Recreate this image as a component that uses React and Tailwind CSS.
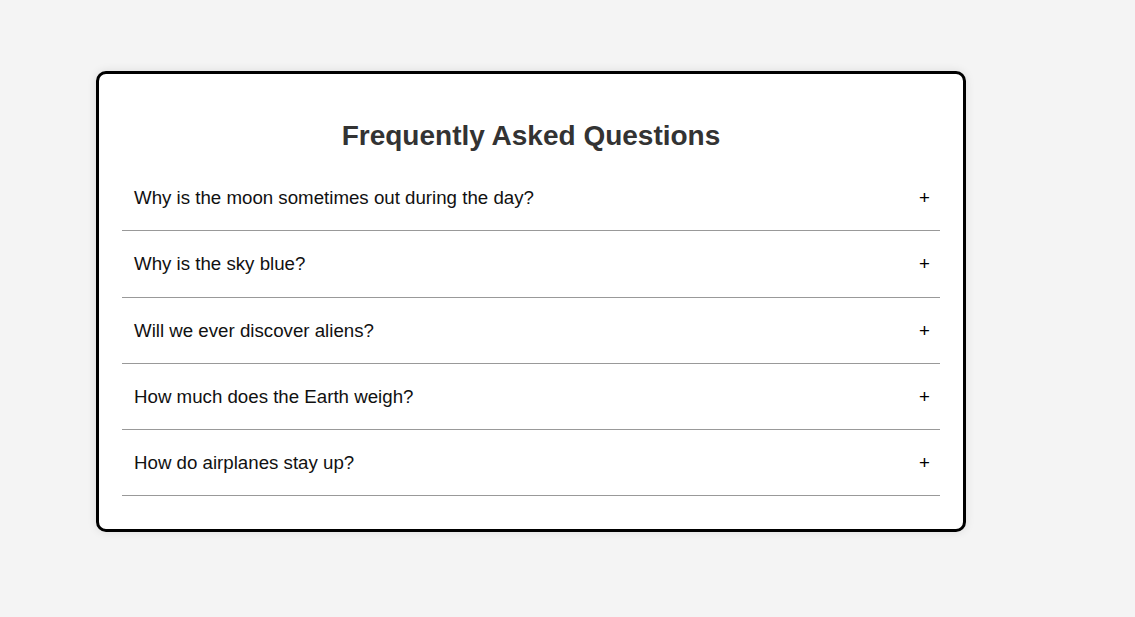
const QUESTIONS = [
  'Why is the moon sometimes out during the day?',
  'Why is the sky blue?',
  'Will we ever discover aliens?',
  'How much does the Earth weigh?',
  'How do airplanes stay up?',
];

export default function App() {
  return (
    <div className="min-h-[617px] bg-[#f4f4f4] pt-[71px] pl-[96px] font-['Liberation_Sans',Arial,sans-serif]">
      <div className="w-[870px] h-[461px] rounded-[10px] border-[3px] border-black bg-white px-[23px] pt-[45px] shadow-[0_0_10px_rgba(0,0,0,0.1)]">
        <h2 className="text-center text-[28px] leading-[34px] font-bold text-[#333]">Frequently Asked Questions</h2>
        <div className="mt-[12px]">
          {QUESTIONS.map((q) => (
            <div
              key={q}
              className="flex items-center justify-between border-b border-[#999] px-[12px] pt-[20px] pb-[20px] text-[18.7px] leading-[25.25px] text-[#111]"
            >
              <span>{q}</span>
              <span className="-mr-[2px] text-black">+</span>
            </div>
          ))}
        </div>
      </div>
    </div>
  );
}
